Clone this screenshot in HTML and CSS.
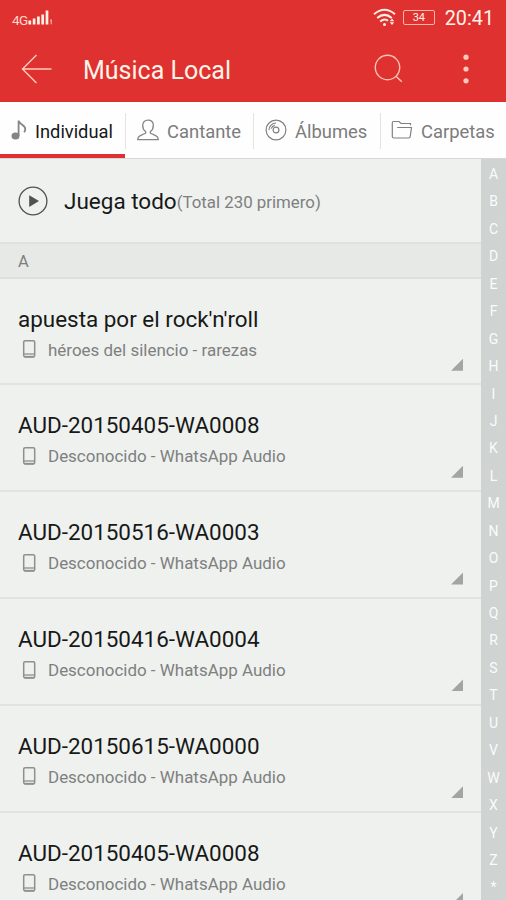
FILE: index.html
```html
<!DOCTYPE html>
<html lang="es">
<head>
<meta charset="utf-8">
<title>Música Local</title>
<link rel="stylesheet" href="styles.css">
</head>
<body>
<svg class="defs" width="0" height="0">
  <symbol id="phone" viewBox="0 0 14 20"><rect x="1.700" y="1.700" width="11" height="16.300" rx="1.400" fill="none" stroke="#8d908e" stroke-width="1.500"/><path d="M2 15h10.400" stroke="#8d908e" stroke-width="1.300"/><path d="M2 17.600h10.400" stroke="#8d908e" stroke-width="1.500"/></symbol>
</svg>
<div class="screen">
  <header class="header">
    <div class="status">
      <span class="network">4G</span>
      <svg class="signal" width="25" height="18" viewBox="0 0 25 18"><path d="M1.800 15.500v-4M6.100 15.500v-6M10.400 15.500v-8M14.700 15.500v-10M19 15.500V1.500" stroke="#fff0e6" stroke-width="2.700"/><path d="M22.200 11.500l1-.8v4.600" fill="none" stroke="#ffc8bb" stroke-width="1"/></svg>
      <svg class="wifi" width="23" height="20" viewBox="0 0 23 20"><g fill="none" stroke="#fff0e6" stroke-width="2"><path d="M1 6.200Q11.500-2.600 22 6.200"/><path d="M4.200 10Q11.500 3.800 18.800 10"/><path d="M7.200 13.600Q11.500 9.800 15 12.800"/></g><circle cx="11.500" cy="16.400" r="1.500" fill="#fff0e6"/><path d="M19 10.500l2.200 2.800h-4.400zM19 17l2.200-2.800h-4.400z" fill="#fff0e6"/></svg>
      <span class="battery">34</span>
      <span class="clock">20:41</span>
    </div>
    <div class="appbar">
      <svg class="back" width="32" height="30" viewBox="0 0 32 30"><path d="M30.500 15H2M15.500 1L1.500 15l14 14" fill="none" stroke="#ffcdbb" stroke-width="1.400"/></svg>
      <h1 class="title">Música Local</h1>
      <svg class="search" width="30" height="30" viewBox="0 0 30 30"><circle cx="13.500" cy="13.500" r="12.200" fill="none" stroke="#ffc2b2" stroke-width="1.400"/><path d="M22 22.200l5.800 5.500" stroke="#ffc2b2" stroke-width="1.500"/></svg>
      <svg class="more" width="8" height="30" viewBox="0 0 8 30"><g fill="#ffc9bb"><circle cx="4" cy="3.200" r="2.600"/><circle cx="4" cy="15" r="2.600"/><circle cx="4" cy="26.800" r="2.600"/></g></svg>
    </div>
  </header>
  <nav class="tabs">
    <div class="tab tab-song active">
      <svg width="16" height="22" viewBox="0 0 16 22"><ellipse cx="4.500" cy="17" rx="4" ry="3.600" fill="#858585"/><path d="M7.600 17V1.500c.3 4 6.700 4 6.700 8.500 0 1.300-.5 2.300-1.200 3.200" fill="none" stroke="#858585" stroke-width="1.800"/></svg>
      <span>Individual</span>
    </div>
    <div class="tab tab-artist">
      <svg width="22" height="22" viewBox="0 0 22 22"><path d="M8.300 12.300C6.500 11 5.700 8.800 5.700 6.500c0-3.400 2.200-5.300 5.300-5.300s5.300 1.900 5.300 5.300c0 2.300-.8 4.500-2.600 5.800-.8.700-.6 1.800.4 2.200l4.600 2.200c1.600.8 2.500 1.700 2.600 3.900H.7c.1-2.200 1-3.100 2.600-3.900l4.600-2.200c1-.4 1.200-1.500.4-2.200z" fill="none" stroke="#858585" stroke-width="1.300"/></svg>
      <span>Cantante</span>
    </div>
    <div class="tab tab-album">
      <svg width="22" height="22" viewBox="0 0 22 22"><g fill="none" stroke="#808080" stroke-width="1.200"><circle cx="11" cy="11" r="9.900"/><circle cx="11" cy="11" r="2.900"/><path d="M4 11a7 7 0 0 1 7-7M6.300 9.700a5 5 0 0 1 3.500-3.400"/></g></svg>
      <span>Álbumes</span>
    </div>
    <div class="tab tab-folder">
      <svg width="22" height="20" viewBox="0 0 22 20"><path d="M19.500 5.300V3.500H10L8 1.500H2.500Q1.300 1.500 1.300 3v13.500Q1.300 18 3 18h14.700q1.300 0 1.500-1.300L20.500 7.500H6.200" fill="none" stroke="#808080" stroke-width="1.200"/></svg>
      <span>Carpetas</span>
    </div>
  </nav>
  <div class="content">
    <main class="list">
      <div class="playall">
        <svg width="30" height="30" viewBox="0 0 30 30"><circle cx="15" cy="15" r="13.900" fill="none" stroke="#505251" stroke-width="1.300"/><path d="M11.200 9.300v11.600l9.800-5.800z" fill="#505251"/></svg>
        <span class="play-label">Juega todo</span><span class="play-count">(Total 230 primero)</span>
      </div>
      <div class="section">A</div>
      <div class="song"><div class="name">apuesta por el rock'n'roll</div><div class="meta"><svg width="14" height="20"><use href="#phone"/></svg><span>héroes del silencio - rarezas</span></div><i class="corner"></i></div>
      <div class="song"><div class="name">AUD-20150405-WA0008</div><div class="meta"><svg width="14" height="20"><use href="#phone"/></svg><span>Desconocido - WhatsApp Audio</span></div><i class="corner"></i></div>
      <div class="song"><div class="name">AUD-20150516-WA0003</div><div class="meta"><svg width="14" height="20"><use href="#phone"/></svg><span>Desconocido - WhatsApp Audio</span></div><i class="corner"></i></div>
      <div class="song"><div class="name">AUD-20150416-WA0004</div><div class="meta"><svg width="14" height="20"><use href="#phone"/></svg><span>Desconocido - WhatsApp Audio</span></div><i class="corner"></i></div>
      <div class="song"><div class="name">AUD-20150615-WA0000</div><div class="meta"><svg width="14" height="20"><use href="#phone"/></svg><span>Desconocido - WhatsApp Audio</span></div><i class="corner"></i></div>
      <div class="song"><div class="name">AUD-20150405-WA0008</div><div class="meta"><svg width="14" height="20"><use href="#phone"/></svg><span>Desconocido - WhatsApp Audio</span></div><i class="corner"></i></div>
    </main>
    <aside class="index">
      <span>A</span><span>B</span><span>C</span><span>D</span><span>E</span><span>F</span><span>G</span><span>H</span><span>I</span><span>J</span><span>K</span><span>L</span><span>M</span><span>N</span><span>O</span><span>P</span><span>Q</span><span>R</span><span>S</span><span>T</span><span>U</span><span>V</span><span>W</span><span>X</span><span>Y</span><span>Z</span><span>*</span>
    </aside>
  </div>
</div>
</body>
</html>
```
FILE: styles.css
```css
* { box-sizing: border-box; }
body { margin: 0; font-family: Roboto, "Liberation Sans", sans-serif; }
svg { display: block; flex: none; }
.defs { position: absolute; }
.screen { width: 506px; height: 900px; overflow: hidden; display: flex; flex-direction: column; background: #eff1ef; white-space: nowrap; }

.header { height: 102px; flex: none; background: #e03131; color: #fff4e8; }
.status { height: 36px; display: flex; align-items: center; padding: 1px 12px 0; }
.network { font-size: 13.5px; width: 16px; margin-top: 2px; color: #ffd9cc; letter-spacing: -0.5px; }
.signal { margin-top: -1px; }
.wifi { margin-left: 320px; margin-top: -1px; }
.battery { width: 32px; height: 15px; margin-left: 7px; margin-top: -2px; border: 1px solid #ffb5a5; border-radius: 2px; font-size: 11px; line-height: 14px; text-align: center; }
.clock { margin-left: 10px; font-size: 19.8px; }
.appbar { height: 66px; display: flex; align-items: center; padding-left: 21px; }
.title { margin: 3px 0 0 30px; width: 291px; font-size: 25px; font-weight: 400; }
.more { margin-left: 58px; }

.tabs { height: 57px; flex: none; display: grid; grid-template-columns: 125px 128px 127px 126px; background: #fefefe; border-bottom: 1px solid #d5d8d6; }
.tab { position: relative; display: flex; align-items: center; font-size: 18.4px; color: #7c7c7c; padding-top: 3px; }
.tab + .tab::before { content: ""; position: absolute; left: 0; top: 11px; width: 1px; height: 36px; background: #e3e3e3; }
.tab svg { margin-top: -3px; }
.tab-song { padding-left: 11px; gap: 8px; color: #171717; border-bottom: 4px solid #e03131; padding-top: 7px; font-size: 18.3px; }
.tab-artist { padding-left: 12px; gap: 8px; }
.tab-album { padding-left: 12px; gap: 8px; }
.tab-folder { padding-left: 11px; gap: 8px; }

.content { flex: 1; min-height: 0; display: flex; }
.list { width: 481px; overflow: hidden; }
.playall { height: 83px; display: flex; align-items: center; padding: 1px 0 0 18px; }
.play-label { margin-left: 16px; font-size: 22.5px; color: #171917; }
.play-count { margin-top: 1px; font-size: 16.85px; color: #7e807f; }
.section { height: 36.5px; padding-left: 18px; background: #e7e9e7; border-top: 2px solid #dfe2df; border-bottom: 2px solid #dcdfdc; font-size: 16.5px; line-height: 35px; color: #7e807f; }
.song { position: relative; height: 106.85px; padding: 26px 0 0 18px; border-bottom: 2px solid #e0e3e1; }
.name { font-size: 22.45px; line-height: 28px; color: #171917; }
.meta { display: flex; align-items: center; height: 24px; margin-top: 5px; padding-left: 4px; gap: 12px; font-size: 16.97px; color: #7e807f; }
.meta svg { margin-top: -1px; }
.corner { position: absolute; right: 18px; bottom: 12.5px; width: 12px; height: 12px; background: #a2a5a3; clip-path: polygon(100% 0, 100% 100%, 0 100%); }
.index { width: 25px; padding-top: 2px; background: #cfd3d2; color: #fbfcfc; font-size: 14px; overflow: hidden; }
.index span { display: block; height: 27.44px; line-height: 27.44px; text-align: center; }
```
